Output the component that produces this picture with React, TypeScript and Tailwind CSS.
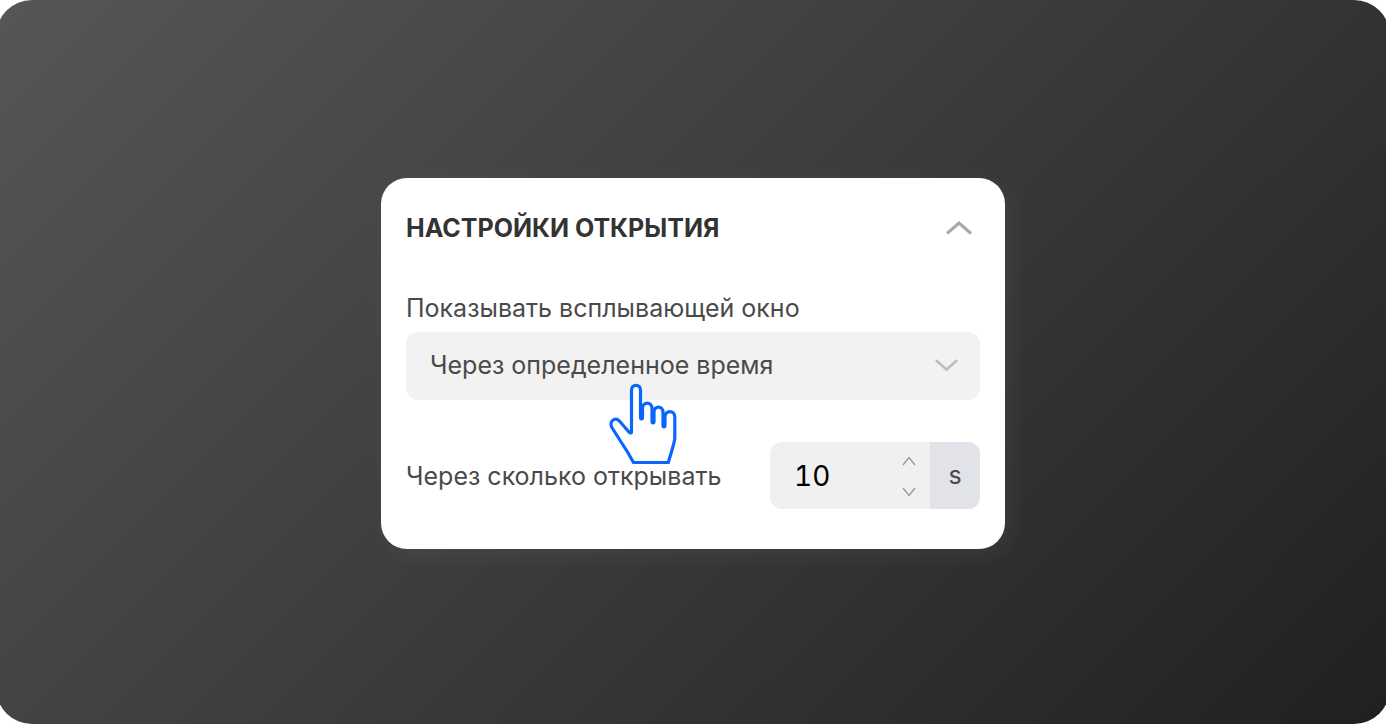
import { useState } from "react";

function Chevron({ up = false, className }: { up?: boolean; className: string }) {
  return (
    <svg viewBox="0 0 26 14" fill="none" stroke="currentColor" strokeWidth="3" className={className} aria-hidden="true">
      <path d={up ? "M1 12.5 13 2 25 12.5" : "M1 1 13 11.5 25 1"} />
    </svg>
  );
}

function StepArrow({ up = false }: { up?: boolean }) {
  return (
    <svg viewBox="0 0 14 10" fill="none" stroke="currentColor" strokeWidth="1.4" className="h-[10px] w-[14px]" aria-hidden="true">
      <path d={up ? "M1 9 7 1.5 13 9" : "M1 1 7 8.5 13 1"} />
    </svg>
  );
}

function HandCursor() {
  return (
    <svg
      viewBox="0 0 68 82"
      fill="#ffffff"
      stroke="#0866ff"
      strokeWidth="3.2"
      className="pointer-events-none absolute left-[203px] top-[51px] h-[82px] w-[68px]"
      aria-hidden="true"
    >
      <path d="M24.5 79.5 18.500 69 3.500 45.500C.5 41 2.500 37.500 5 36.500C8 35.300 9.500 37 11.500 39.200L19.500 48.500Q22.500 51.500 22.500 48.500V7C22.500 .7 31.500 .7 31.500 7V34.500C31.500 36.300 33.500 36.300 33.500 34.500V25.500C33.500 18.200 43 18.200 43 25.500V38.500C43 40.300 45 40.300 45 38.500V29.500C45 22.200 54 22.200 54 29.500V42.500C54 44.300 56 44.300 56 42.500V34C56 26.700 65.800 26.700 65.800 34V55C65.800 58 64 63 63 67L59.300 79.500Z" />
    </svg>
  );
}

export default function App() {
  const [open, setOpen] = useState(true);
  const [seconds, setSeconds] = useState(10);

  return (
    <div className="overflow-hidden bg-white font-['Inter','Liberation_Sans',sans-serif]">
      <main className="-mx-1 flex min-h-screen items-center justify-center rounded-[36px] bg-linear-[135deg] from-[#565656] to-[#202020]">
        <section className="mt-[3px] w-full max-w-[624px] rounded-[26px] bg-white px-[25px] pt-7 pb-10 text-[#4a4a4a] shadow-[6px_6px_24px_rgba(255,255,255,0.06)]">
          <div className="flex items-center justify-between pr-2">
            <h1 className="text-[25px] leading-[44px] font-bold text-[#333333]">НАСТРОЙКИ ОТКРЫТИЯ</h1>
            <button type="button" aria-label="Свернуть" aria-expanded={open} onClick={() => setOpen(!open)} className="text-[#a9a9a9]">
              <Chevron up={open} className="h-[14px] w-[26px]" />
            </button>
          </div>
          {open && (
            <div className="mt-[38px]">
              <label htmlFor="trigger" className="block text-[25px] leading-[40px]">
                Показывать всплывающей окно
              </label>
              <div className="relative mt-1">
                <select id="trigger" className="block h-[68px] w-full appearance-none rounded-[12px] bg-[#f2f2f2] px-6 text-[25px]">
                  <option>Через определенное время</option>
                </select>
                <Chevron className="pointer-events-none absolute top-[27px] right-[22px] h-[13px] w-[23px] text-[#bdbdbd]" />
                <HandCursor />
              </div>
              <div className="mt-[42px] flex items-center justify-between">
                <label htmlFor="delay" className="text-[25px] leading-[40px]">
                  Через сколько открывать
                </label>
                <div className="flex h-[67px] w-[210px] overflow-hidden rounded-[12px] bg-[#f0f0f0]">
                  <input
                    id="delay"
                    type="text"
                    inputMode="numeric"
                    value={seconds}
                    onChange={(e) => setSeconds(Number(e.target.value) || 0)}
                    className="min-w-0 flex-1 pl-6 text-[28px] text-black tabular-nums"
                  />
                  <div className="flex flex-col justify-between pt-[14px] pr-[14px] pb-3 text-[#999999]">
                    <button type="button" aria-label="Увеличить" onClick={() => setSeconds(seconds + 1)}>
                      <StepArrow up />
                    </button>
                    <button type="button" aria-label="Уменьшить" onClick={() => setSeconds(Math.max(0, seconds - 1))}>
                      <StepArrow />
                    </button>
                  </div>
                  <span className="flex w-[50px] items-center justify-center bg-[#e2e3e8] text-[25px]">s</span>
                </div>
              </div>
            </div>
          )}
        </section>
      </main>
    </div>
  );
}
